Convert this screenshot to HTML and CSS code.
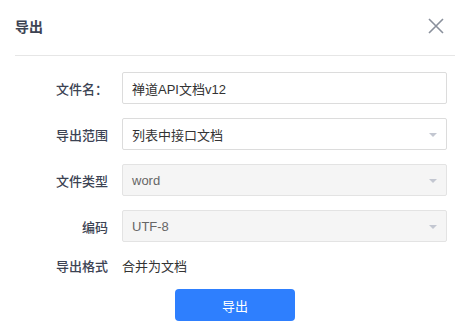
FILE: index.html
```html
<!DOCTYPE html>
<html lang="zh-CN">
<head>
<meta charset="utf-8">
<title>导出</title>
<link rel="stylesheet" href="styles.css">
</head>
<body>
<div class="dialog">
  <div class="header">
    <div class="title">导出</div>
    <button class="close" aria-label="关闭">
      <svg width="16" height="16" viewBox="0 0 16 16"><path d="M1 1 L15 15 M15 1 L1 15" stroke="#8a909c" stroke-width="1.6" fill="none"/></svg>
    </button>
  </div>
  <div class="form">
    <div class="label">文件名：</div>
    <div class="control"><div class="input">禅道API文档v12</div></div>

    <div class="label">导出范围</div>
    <div class="control"><div class="input select">列表中接口文档<span class="caret"></span></div></div>

    <div class="label">文件类型</div>
    <div class="control"><div class="input select disabled">word<span class="caret"></span></div></div>

    <div class="label">编码</div>
    <div class="control"><div class="input select disabled">UTF-8<span class="caret"></span></div></div>

    <div class="label short">导出格式</div>
    <div class="control short"><span class="plain">合并为文档</span></div>
  </div>
  <div class="actions">
    <button class="primary">导出</button>
  </div>
</div>
</body>
</html>
```

FILE: styles.css
```css
* { box-sizing: border-box; }
html, body { margin: 0; padding: 0; background: #fff; }
body {
  font-family: "Liberation Sans", "Noto Sans CJK SC", sans-serif;
  font-size: 13px;
  color: #333;
}
.dialog {
  width: 470px;
  padding: 0 15px;
}
.header {
  height: 56px;
  border-bottom: 1px solid #e6e6e6;
  display: flex;
  align-items: center;
  justify-content: space-between;
  padding-bottom: 4px;
}
.title {
  font-size: 14px;
  font-weight: 700;
  color: #3c4353;
  font-family: "Noto Sans CJK SC", sans-serif;
}
.close {
  border: 0;
  background: none;
  padding: 0;
  margin-right: 11px;
  width: 16px;
  height: 16px;
  display: flex;
}
.form {
  display: grid;
  grid-template-columns: 93px 325px;
  column-gap: 14px;
  row-gap: 14px;
  padding-top: 16px;
}
.label {
  height: 32px;
  display: flex;
  align-items: center;
  justify-content: flex-end;
  font-family: "Noto Sans CJK SC", sans-serif;
  font-weight: 500;
  color: #3c4353;
  font-size: 13px;
}
.label.short { height: 18px; }
.control { height: 32px; }
.control.short {
  height: 18px;
  display: flex;
  align-items: center;
}
.input {
  position: relative;
  height: 32px;
  border: 1px solid #dcdcdc;
  border-radius: 2px;
  padding: 0 9px;
  display: flex;
  align-items: center;
  color: #333;
  background: #fff;
}
.input.disabled {
  background: #f5f5f5;
  color: #666;
  border-color: #e3e3e3;
}
.caret {
  position: absolute;
  right: 9px;
  top: 14px;
  width: 0;
  height: 0;
  border-left: 4px solid transparent;
  border-right: 4px solid transparent;
  border-top: 4px solid #c3c7d1;
}
.plain { color: #333; font-family: "Noto Sans CJK SC", sans-serif; }
.actions {
  display: flex;
  justify-content: center;
  padding-top: 15px;
}
.primary {
  width: 120px;
  height: 32px;
  border: 0;
  border-radius: 4px;
  background: #2e7ffe;
  color: #fff;
  font-family: "Noto Sans CJK SC", sans-serif;
  font-size: 13px;
  font-weight: 400;
}
```
